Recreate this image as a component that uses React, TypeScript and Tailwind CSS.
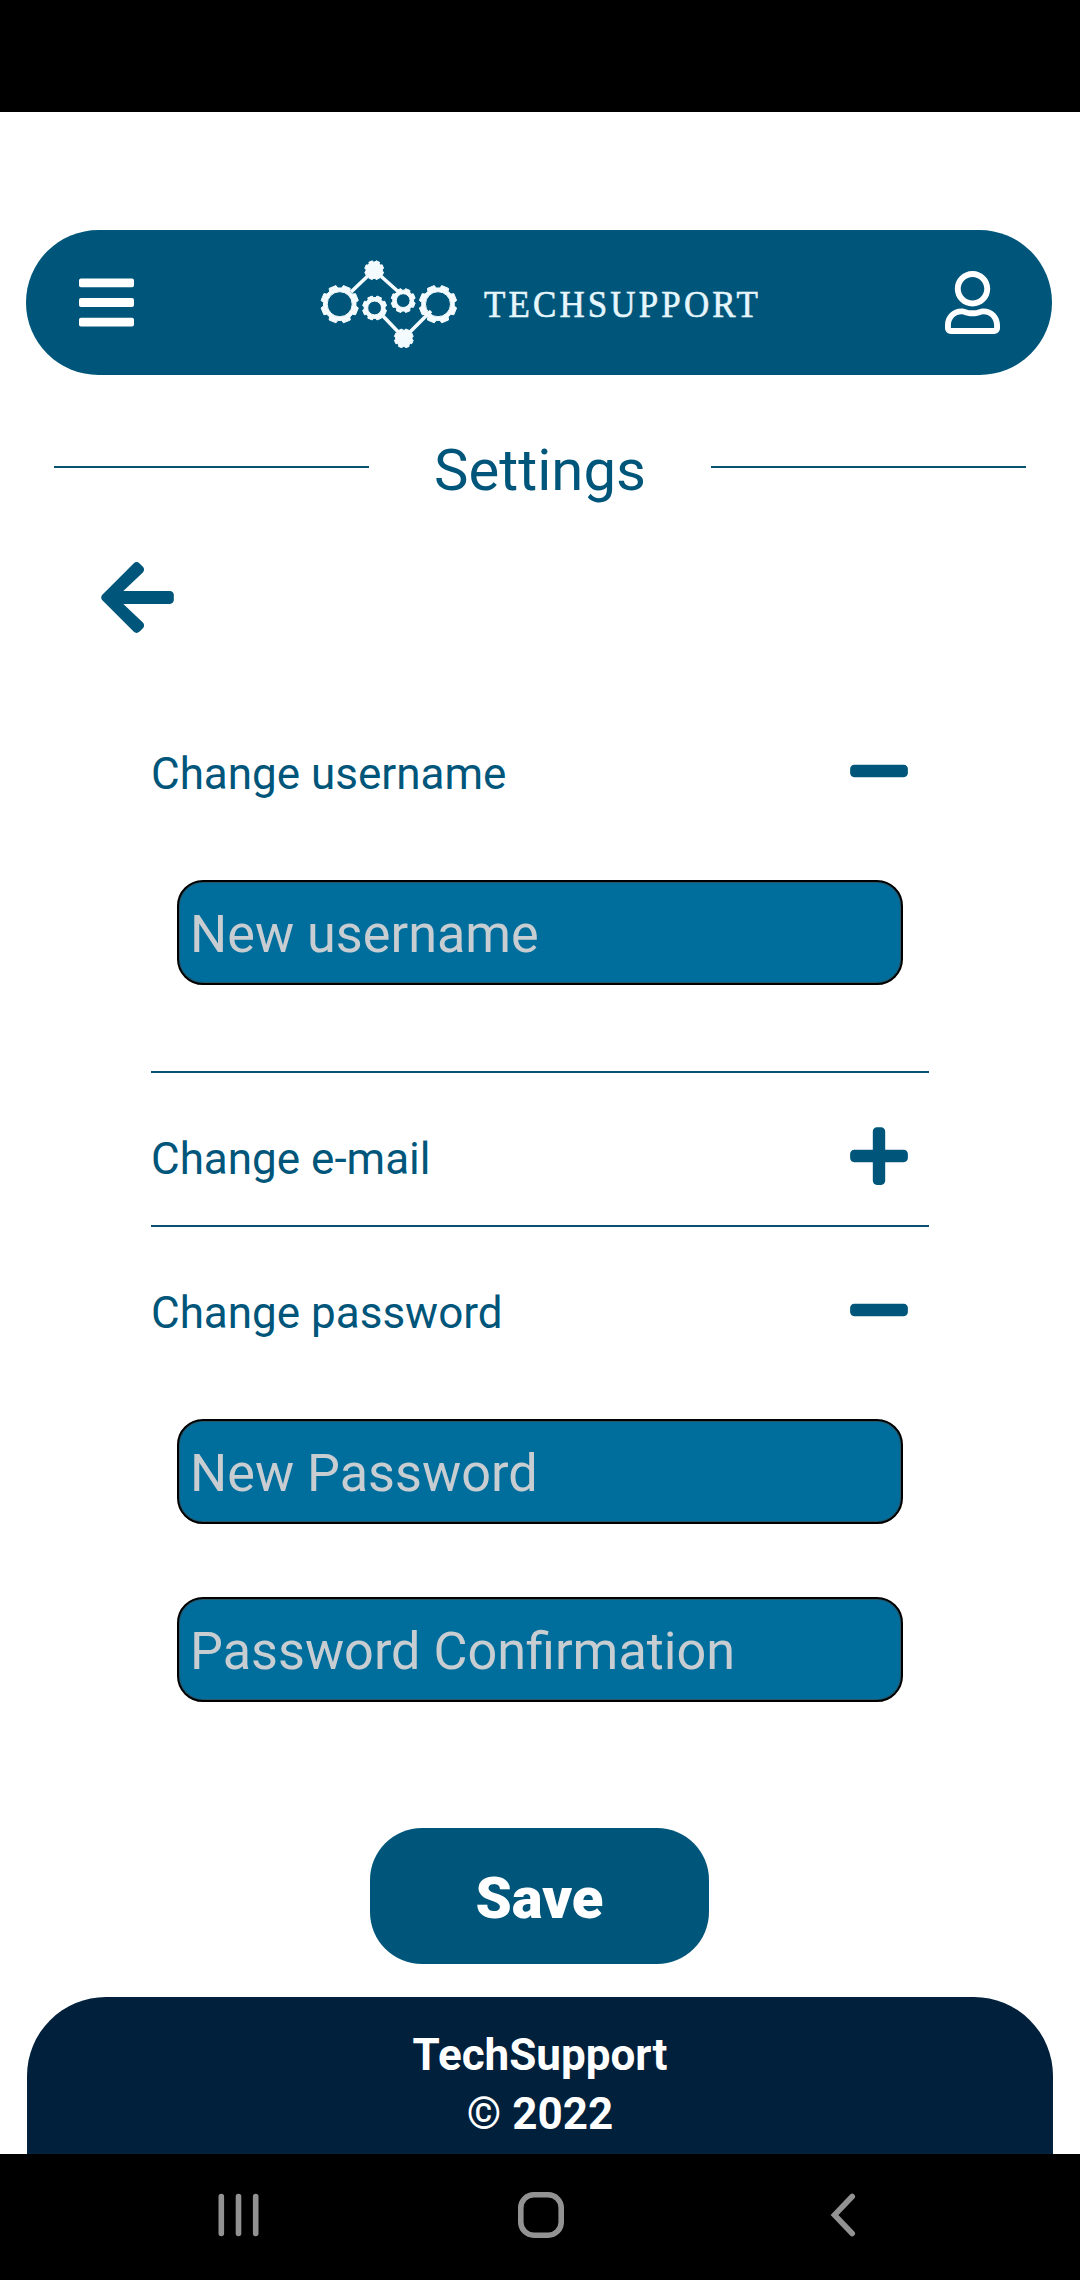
import React from "react";
import { FaArrowLeft, FaBars, FaMinus, FaPlus, FaRegUser } from "react-icons/fa";

type GearProps = {
  cx: number;
  cy: number;
  r: number;
  hole?: number;
  teeth?: number;
  turn?: number;
};

function Gear({ cx, cy, r, hole = 0, teeth = 8, turn = 0.5 }: GearProps) {
  const step = (Math.PI * 2) / teeth;
  const root = r * 0.86;
  const points: string[] = [];
  for (let i = 0; i < teeth; i++) {
    const a = (i + turn) * step;
    const corners: [number, number][] = [
      [root, -0.35],
      [r, -0.25],
      [r, 0.25],
      [root, 0.35],
    ];
    for (const [radius, off] of corners) {
      const t = a + off * step;
      points.push(`${(cx + radius * Math.sin(t)).toFixed(2)} ${(cy - radius * Math.cos(t)).toFixed(2)}`);
    }
  }
  const ring = hole
    ? `M${cx - hole} ${cy}a${hole} ${hole} 0 1 0 ${hole * 2} 0a${hole} ${hole} 0 1 0 ${-hole * 2} 0Z`
    : "";
  return <path fillRule="evenodd" d={`M${points.join("L")}Z${ring}`} />;
}

function Logo() {
  return (
    <div className="flex items-center">
      <svg className="h-[90px] w-[140px]" viewBox="0 0 140 90" fill="#f4fbfe" stroke="#f4fbfe" strokeWidth="1" strokeLinejoin="round">
        <path d="M31 34L54 12L82 37M62 57L84 80L111 53" fill="none" strokeWidth="3.6" />
        <circle cx="54.6" cy="50" r="9" fill="#00567a" stroke="none" />
        <circle cx="83.2" cy="42.6" r="9" fill="#00567a" stroke="none" />
        <Gear cx={19.7} cy={46.2} r={19} hole={12.5} />
        <Gear cx={118} cy={46.2} r={19} hole={12.5} />
        <Gear cx={54.6} cy={50} r={12.2} hole={6.9} />
        <Gear cx={83.2} cy={42.6} r={12.2} hole={6.9} />
        <Gear cx={54.2} cy={12.2} r={9.6} />
        <Gear cx={83.8} cy={80.4} r={9.6} />
      </svg>
      <div className="ml-[24px] w-[275px]">
        <span className="inline-block origin-left scale-x-[0.92] pt-[3px] font-['Liberation_Serif',serif] text-[38px] leading-[42px] tracking-[3.4px] text-[#e6f6fc] [-webkit-text-stroke:0.6px_#e6f6fc]">
          TECHSUPPORT
        </span>
      </div>
    </div>
  );
}

function SectionHeader({ label, open }: { label: string; open: boolean }) {
  return (
    <div className="flex h-[66px] items-center justify-between pr-[21px]">
      <span className="pt-[6px] text-[44px] leading-[52px]">{label}</span>
      {open ? <FaMinus className="h-[66px] w-[58px]" /> : <FaPlus className="h-[66px] w-[58px]" />}
    </div>
  );
}

function Field({ placeholder, className }: { placeholder: string; className: string }) {
  return (
    <input
      placeholder={placeholder}
      className={`mx-[26px] block h-[105px] w-[726px] rounded-[26px] border-[2px] border-black bg-[#006e9c] px-[11px] pt-[3px] text-[52.2px] shadow-[inset_0_0_0_1px_#2a5468] placeholder:text-[#c7cdd1] placeholder:opacity-100 ${className}`}
    />
  );
}

export default function App() {
  return (
    <div className="flex h-[2280px] w-[1080px] flex-col overflow-hidden bg-white font-['Roboto',sans-serif] text-[#00567a]">
      <div className="h-[112px] bg-black" />

      <header className="mt-[118px] mr-[28px] ml-[26px] flex h-[145px] items-center justify-between rounded-full bg-[#00567a] pr-[52px] pl-[53px] text-white">
        <FaBars className="h-[63px] w-[55px]" />
        <Logo />
        <FaRegUser className="h-[63px] w-[55px]" />
      </header>

      <div className="mx-[54px] mt-[59px] flex h-[66px] items-center justify-between">
        <div className="h-[2px] w-[315px] bg-[#0b5170]" />
        <h1 className="pt-[6px] text-[58px] leading-[60px]">Settings</h1>
        <div className="h-[2px] w-[315px] bg-[#0b5170]" />
      </div>

      <FaArrowLeft className="mt-[56px] ml-[101px] h-[83px] w-[73px]" />

      <main className="mt-[99px] ml-[151px] w-[778px]">
        <SectionHeader label="Change username" open />
        <Field placeholder="New username" className="mt-[76px]" />
        <div className="mt-[86px] h-[2px] bg-[#0b5170]" />
        <div className="mt-[50px]">
          <SectionHeader label="Change e-mail" open={false} />
        </div>
        <div className="mt-[36px] h-[2px] bg-[#0b5170]" />
        <div className="mt-[50px]">
          <SectionHeader label="Change password" open />
        </div>
        <Field placeholder="New Password" className="mt-[76px]" />
        <Field placeholder="Password Confirmation" className="mt-[73px]" />
      </main>

      <button className="mt-[126px] ml-[370px] h-[136px] w-[339px] rounded-[52px] bg-[#00567a] pt-[4px] text-[58px] font-black text-white">
        Save
      </button>

      <footer className="mt-[33px] mr-[27px] ml-[27px] h-[157px] rounded-t-[79px] bg-[#00203b] pt-[29px] text-center text-[44px] leading-[59px] font-bold text-white">
        <p>TechSupport</p>
        <p>© 2022</p>
      </footer>

      <nav className="flex h-[126px] items-center justify-between bg-black px-[218px] pb-[4px]">
        <svg className="h-[44px] w-[42px]" viewBox="0 0 42 44" stroke="#929292" strokeWidth="5.6" strokeLinecap="round">
          <path d="M3.3 3.5V40.5M20.5 3.5V40.5M37.7 3.5V40.5" />
        </svg>
        <svg className="mr-[9px] h-[46px] w-[46px]" viewBox="0 0 46 46" fill="none" stroke="#929292" strokeWidth="5.6">
          <rect x="2.8" y="2.8" width="40.4" height="40.4" rx="13" />
        </svg>
        <svg className="mr-[6px] h-[44px] w-[26px]" viewBox="0 0 26 44" fill="none" stroke="#929292" strokeWidth="5.6" strokeLinecap="round">
          <path d="M22.2 3.5L4.5 22L22.2 40.5" />
        </svg>
      </nav>
    </div>
  );
}
